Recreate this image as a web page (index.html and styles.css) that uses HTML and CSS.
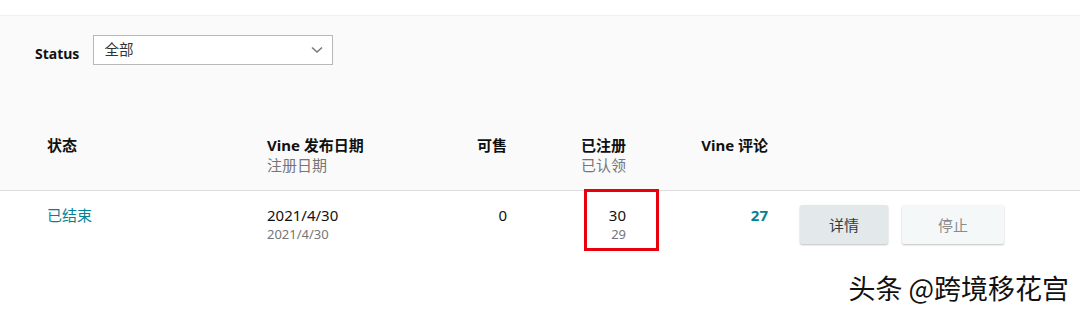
FILE: index.html
```html
<!DOCTYPE html>
<html lang="zh">
<head>
<meta charset="UTF-8">
<title>Vine</title>
<link rel="stylesheet" href="styles.css">
</head>
<body>
<div class="topbar"></div>
<div class="panel">
  <div class="filter">
    <span class="filter-label">Status</span>
    <div class="select">
      <span>全部</span>
      <svg class="chevron" width="12" height="8" viewBox="0 0 12 8"><path d="M1 1.5 L6 6 L11 1.5" fill="none" stroke="#777" stroke-width="1.5"/></svg>
    </div>
  </div>
  <div class="grid thead">
    <div class="cell"><div class="main">状态</div></div>
    <div class="cell"><div class="main">Vine 发布日期</div><div class="sub">注册日期</div></div>
    <div class="cell right"><div class="main">可售</div></div>
    <div class="cell right"><div class="main">已注册</div><div class="sub">已认领</div></div>
    <div class="cell right"><div class="main">Vine 评论</div></div>
    <div class="cell"></div>
  </div>
</div>
<div class="grid trow">
  <div class="cell"><div class="main link">已结束</div></div>
  <div class="cell"><div class="main">2021/4/30</div><div class="sub">2021/4/30</div></div>
  <div class="cell right"><div class="main">0</div></div>
  <div class="cell right marked"><div class="main">30</div><div class="sub">29</div><div class="redbox"></div></div>
  <div class="cell right"><div class="main count">27</div></div>
  <div class="cell actions">
    <button class="btn btn-detail">详情</button>
    <button class="btn btn-stop">停止</button>
  </div>
</div>
<div class="watermark">头条 @跨境移花宫</div>
</body>
</html>
```
FILE: styles.css
```css
body, html {
  margin: 0;
  background: #fff;
  font-family: "Noto Sans", "Noto Sans CJK SC", sans-serif;
  color: #0f1111;
}
body {
  position: relative;
  height: 313px;
  overflow: hidden;
}
.topbar {
  height: 15px;
  background: #fff;
  border-bottom: 1px solid #f0f0f0;
}
.panel {
  background: #fafafa;
  height: 174px;
  border-bottom: 1px solid #ddd;
}
.filter {
  display: flex;
  align-items: center;
  padding: 19px 0 0 35px;
  gap: 14px;
}
.filter-label {
  font-size: 14px;
  font-weight: bold;
  color: #111;
  margin-top: 7px;
}
.select {
  width: 219px;
  height: 28px;
  border: 1px solid #b8b8b8;
  background: #fff;
  display: flex;
  align-items: center;
  justify-content: space-between;
  padding: 0 9px 0 10px;
  font-size: 14.5px;
  color: #333;
}
.select span {
  margin-top: -3px;
}
.grid {
  display: grid;
  grid-template-columns: 220px 160px 80px 119px 142px auto;
  padding-left: 47px;
}
.thead {
  margin-top: 70px;
}
.thead .main {
  font-weight: bold;
  font-size: 15px;
  line-height: 20px;
}
.sub {
  color: #767676;
  font-size: 15px;
  line-height: 20px;
}
.right {
  text-align: right;
}
.trow {
  padding-top: 14px;
}
.trow .main {
  font-size: 15px;
  line-height: 20px;
}
.trow .sub {
  font-size: 13px;
  line-height: 18px;
}
.link {
  color: #008296;
}
.count {
  color: #008296;
  font-weight: bold;
}
.marked {
  position: relative;
}
.redbox {
  position: absolute;
  left: 77px;
  top: -16px;
  width: 69px;
  height: 56px;
  border: 3px solid #e8000b;
}
.actions {
  display: flex;
  gap: 14px;
  padding-left: 32px;
}
.btn {
  height: 39px;
  border: none;
  border-radius: 2px;
  font-family: "Noto Sans", "Noto Sans CJK SC", sans-serif;
  font-size: 15px;
  box-shadow: 0 1px 2px rgba(0, 0, 0, 0.25);
}
.btn-detail {
  width: 88px;
  background: #e3e9eb;
  color: #2c3e44;
}
.btn-stop {
  width: 102px;
  background: #f5f8f9;
  color: #8a8a8a;
}
.watermark {
  position: absolute;
  right: 11px;
  top: 268px;
  font-size: 27px;
  color: #111;
  font-family: "Noto Sans CJK SC", sans-serif;
  text-shadow: 1px 1px 0 #fff, -1px -1px 0 #fff, 1px -1px 0 #fff, -1px 1px 0 #fff;
}
```
